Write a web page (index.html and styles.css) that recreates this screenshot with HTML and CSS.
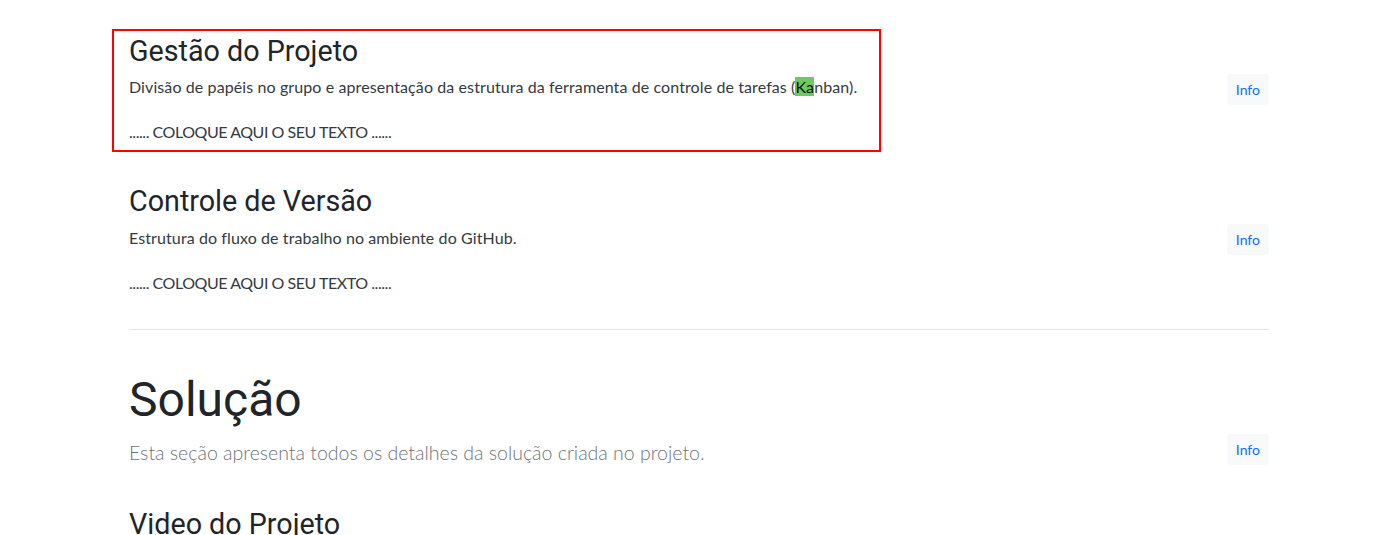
FILE: index.html
```html
<!DOCTYPE html>
<html lang="pt">
<head>
<meta charset="utf-8">
<title>Projeto</title>
<link rel="stylesheet" href="styles.css">
</head>
<body>
<main class="container">
  <div class="item item-first">
    <div class="item-body">
      <h3 class="title">Gestão do Projeto</h3>
      <p class="desc">Divisão de papéis no grupo e apresentação da estrutura da ferramenta de controle de tarefas (<span class="mark">Ka</span>nban).</p>
      <p class="text">...... COLOQUE AQUI O SEU TEXTO ......</p>
    </div>
    <a class="btn-info" href="#">Info</a>
    <div class="highlight"></div>
  </div>
  <div class="item">
    <div class="item-body">
      <h3 class="title">Controle de Versão</h3>
      <p class="desc">Estrutura do fluxo de trabalho no ambiente do GitHub.</p>
      <p class="text">...... COLOQUE AQUI O SEU TEXTO ......</p>
    </div>
    <a class="btn-info" href="#">Info</a>
  </div>
  <hr class="divider">
  <section class="section">
    <h1 class="section-title">Solução</h1>
    <div class="lead-row">
      <p class="lead">Esta seção apresenta todos os detalhes da solução criada no projeto.</p>
      <a class="btn-info btn-lead" href="#">Info</a>
    </div>
    <h3 class="title sub">Video do Projeto</h3>
  </section>
</main>
</body>
</html>
```
FILE: styles.css
```css
html, body {
  margin: 0;
  padding: 0;
  background: #fff;
}
body {
  font-family: Lato, "Open Sans", sans-serif;
  font-size: 16px;
  line-height: 1.5;
  color: #343a40;
  overflow: hidden;
}
.container {
  width: 1140px;
  padding: 34px 0 0 129px;
}
.item {
  position: relative;
  display: flex;
  align-items: center;
  justify-content: space-between;
  margin-bottom: 40px;
}
.title {
  font-family: Roboto, sans-serif;
  font-weight: 400;
  font-size: 28.7px;
  line-height: 1.2;
  color: #212529;
  margin: 0 0 7px 0;
}
.desc {
  margin: 0 0 21px 0;
  letter-spacing: 0.1px;
}
.text {
  margin: 0;
  letter-spacing: -0.45px;
}
.mark {
  background: #6fc95c;
  color: #111;
}
.btn-info {
  display: inline-block;
  font-family: Lato, "Open Sans", sans-serif;
  font-size: 14px;
  line-height: 21px;
  padding: 4px 8px;
  border: 1px solid #f8f9fa;
  border-radius: 3px;
  background: #f8f9fa;
  color: #0d6efd;
  text-decoration: none;
}
.btn-lead {
  margin-bottom: 6px;
}
.highlight {
  position: absolute;
  left: -17px;
  top: -5px;
  width: 765px;
  height: 119px;
  border: 2px solid #ff0000;
  pointer-events: none;
}
.divider {
  border: 0;
  border-top: 1px solid #e5e5e5;
  margin: -6px 0 0 0;
  height: 0;
}
.section-title {
  font-family: Roboto, sans-serif;
  font-weight: 400;
  font-size: 48px;
  line-height: 1.2;
  color: #212529;
  margin: 40.8px 0 0 0;
}
.lead-row {
  display: flex;
  align-items: center;
  justify-content: space-between;
  margin-top: 6px;
}
.lead {
  font-size: 19.5px;
  font-weight: 300;
  line-height: 30px;
  color: #6c757d;
  margin: 0;
}
.sub {
  margin-top: 35.5px;
}
```
